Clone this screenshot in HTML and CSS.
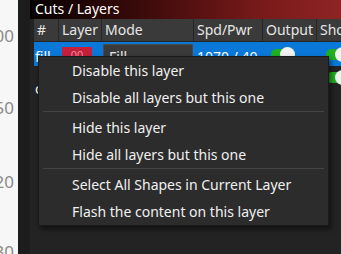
FILE: index.html
```html
<!DOCTYPE html>
<html>
<head>
<meta charset="utf-8">
<link rel="stylesheet" href="styles.css">
</head>
<body>
<div class="app">
  <div class="canvas">
    <div class="ruler">
      <span class="num n1">00</span>
      <span class="num n2">50</span>
      <span class="num n3">20</span>
      <span class="num n4">30</span>
    </div>
  </div>
  <div class="strip"></div>
  <div class="panel">
    <div class="title">Cuts / Layers</div>
    <div class="table">
      <div class="hrow">
        <div class="c c-num">#</div>
        <div class="c c-layer">Layer</div>
        <div class="c c-mode">Mode</div>
        <div class="c c-spd">Spd/Pwr</div>
        <div class="c c-out">Output</div>
        <div class="c c-show">Show</div>
      </div>
      <div class="row sel">
        <div class="c c-num txt">fill</div>
        <div class="c c-layer"><span class="swatch">00</span></div>
        <div class="c c-mode"><span class="combo">Fill</span></div>
        <div class="c c-spd txt">1070 / 40</div>
        <div class="c c-out"><span class="toggle"><span class="knob"></span></span></div>
        <div class="c c-show"><span class="toggle"><span class="knob"></span></span></div>
      </div>
      <div class="row row2">
        <div class="c c-num txt">cut</div>
        <div class="c c-layer"></div>
        <div class="c c-mode"></div>
        <div class="c c-spd"></div>
        <div class="c c-out"></div>
        <div class="c c-show"><span class="toggle"><span class="knob"></span></span></div>
      </div>
    </div>
  </div>
  <div class="menu">
    <div class="item">Disable this layer</div>
    <div class="item">Disable all layers but this one</div>
    <div class="sep"></div>
    <div class="item">Hide this layer</div>
    <div class="item">Hide all layers but this one</div>
    <div class="sep"></div>
    <div class="item">Select All Shapes in Current Layer</div>
    <div class="item">Flash the content on this layer</div>
  </div>
</div>
</body>
</html>
```
FILE: styles.css
```css
* { box-sizing: border-box; }
html, body { margin: 0; padding: 0; }
body {
  width: 341px;
  height: 254px;
  overflow: hidden;
  background: #262626;
  font-family: "Noto Sans", "Open Sans", sans-serif;
  font-size: 14px;
}
.app {
  position: relative;
  display: flex;
  width: 341px;
  height: 254px;
  overflow: hidden;
}
.canvas {
  width: 18px;
  flex: none;
  background: #f7f7f7;
  overflow: hidden;
}
.ruler {
  position: relative;
  height: 254px;
}
.num {
  position: absolute;
  right: 4px;
  color: #8a8a8a;
  font-size: 17px;
  line-height: 18px;
}
.n1 { top: 27px; }
.n2 { top: 99px; }
.n3 { top: 173px; }
.n4 { top: 243px; }
.strip {
  width: 12px;
  flex: none;
  background: #1c1c1c;
}
.panel {
  flex: 1;
  background: #282828;
  display: flex;
  flex-direction: column;
  overflow: hidden;
}
.title {
  height: 19px;
  padding-left: 5px;
  color: #ffffff;
  font-size: 14px;
  line-height: 18px;
  background: linear-gradient(to right, #050000 0%, #3a0a0a 35%, #7a1a1a 75%, #8e2424 100%);
  white-space: nowrap;
}
.table {
  padding-left: 4px;
  background: #232323;
  flex: 1;
}
.hrow {
  display: flex;
  height: 23px;
  background: #3a3a3a;
  color: #e6e6e6;
  white-space: nowrap;
  border-bottom: 1px solid #242424;
}
.hrow .c {
  border-right: 1px solid #262626;
  padding-left: 3px;
  line-height: 22px;
  overflow: hidden;
}
.c { flex: none; overflow: hidden; white-space: nowrap; }
.c-num { width: 25px; }
.c-layer { width: 43px; }
.c-mode { width: 92px; }
.c-spd { width: 69px; }
.c-out { width: 54px; }
.c-show { width: 40px; }
.row {
  display: flex;
  color: #ffffff;
}
.row .c { padding-left: 3px; }
.row .c-num { padding-left: 1px; }
.sel {
  height: 24px;
  background: #0a78d8;
}
.sel .txt { padding-top: 5px; line-height: 20px; }
.swatch {
  display: inline-block;
  margin-top: 5px;
  width: 30px;
  height: 15px;
  background: #c4203c;
  color: #f08aa0;
  font-size: 11px;
  line-height: 15px;
  text-align: center;
  vertical-align: top;
}
.sel .c-mode { padding-left: 1px; }
.combo {
  display: inline-block;
  margin-top: 2px;
  width: 90px;
  height: 22px;
  background: #3a3a3a;
  border: 1px solid #4a4a4a;
  color: #e8e8e8;
  padding-left: 5px;
  padding-top: 3px;
  line-height: 18px;
  vertical-align: top;
}
.toggle {
  display: inline-block;
  position: relative;
  margin-top: 7px;
  margin-left: 5px;
  width: 22px;
  height: 11px;
  border-radius: 6px;
  background: #20b020;
  vertical-align: top;
}
.knob {
  position: absolute;
  right: -2px;
  top: -2px;
  width: 15px;
  height: 15px;
  border-radius: 50%;
  background: #f2f2f2;
}
.c-show .toggle { margin-left: 6px; }
.row2 { height: 34px; }
.row2 .txt { padding-top: 15px; line-height: 16px; }
.row2 .toggle { margin-top: 6px; }
.menu {
  position: absolute;
  left: 38px;
  top: 56px;
  width: 291px;
  background: #2c2c2c;
  border: 1px solid #1a1a1a;
  box-shadow: 2px 3px 5px rgba(0, 0, 0, 0.55);
  color: #f0f0f0;
  font-size: 14px;
  padding: 0;
}
.item {
  height: 27px;
  line-height: 27px;
  padding-left: 33px;
  white-space: nowrap;
}
.sep {
  height: 3px;
  margin: 0 4px;
  border-top: 1px solid #444444;
}
```
